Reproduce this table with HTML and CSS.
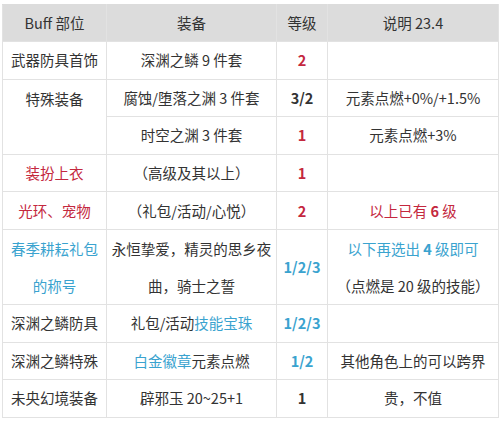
FILE: index.html
```html
<!DOCTYPE html>
<html lang="zh-CN">
<head>
<meta charset="utf-8">
<link rel="stylesheet" href="styles.css">
</head>
<body>
<table class="buff">
  <colgroup>
    <col class="c1"><col class="c2"><col class="c3"><col class="c4">
  </colgroup>
  <thead>
    <tr class="head"><th>Buff 部位</th><th>装备</th><th>等级</th><th>说明 23.4</th></tr>
  </thead>
  <tbody>
    <tr class="row"><td>武器防具首饰</td><td>深渊之鳞 9 件套</td><td class="lv red">2</td><td></td></tr>
    <tr class="row"><td rowspan="2" class="top">特殊装备</td><td>腐蚀/堕落之渊 3 件套</td><td class="lv">3/2</td><td>元素点燃+0%/+1.5%</td></tr>
    <tr class="row"><td>时空之渊 3 件套</td><td class="lv red">1</td><td>元素点燃+3%</td></tr>
    <tr class="row"><td class="red">装扮上衣</td><td>（高级及其以上）</td><td class="lv red">1</td><td></td></tr>
    <tr class="row"><td class="red">光环、宠物</td><td>（礼包/活动/心悦）</td><td class="lv red">2</td><td class="red">以上已有 <b>6</b> 级</td></tr>
    <tr class="tall"><td class="blue two">春季耕耘礼包<br>的称号</td><td class="two">永恒挚爱，精灵的思乡夜<br>曲，骑士之誓</td><td class="lv blue">1/2/3</td><td class="two"><span class="blue">以下再选出 <b>4</b> 级即可</span><br>（点燃是 20 级的技能）</td></tr>
    <tr class="row"><td>深渊之鳞防具</td><td>礼包/活动<span class="blue">技能宝珠</span></td><td class="lv blue">1/2/3</td><td></td></tr>
    <tr class="row"><td>深渊之鳞特殊</td><td><span class="blue">白金徽章</span>元素点燃</td><td class="lv blue">1/2</td><td>其他角色上的可以跨界</td></tr>
    <tr class="row"><td>未央幻境装备</td><td>辟邪玉 20~25+1</td><td class="lv">1</td><td>贵，不值</td></tr>
  </tbody>
</table>
</body>
</html>
```
FILE: styles.css
```css
html, body {
  margin: 0;
  padding: 0;
  background: #ffffff;
}
body {
  padding: 4px 2px 0 2px;
  font-family: "Noto Sans CJK SC", "Noto Sans", sans-serif;
  font-size: 14.5px;
  color: #333333;
}
.buff {
  border-collapse: collapse;
  table-layout: fixed;
  width: 496px;
}
.c1 { width: 104px; }
.c2 { width: 170px; }
.c3 { width: 51px; }
.c4 { width: 171px; }
.buff th, .buff td {
  border: 1px solid #e2e2e2;
  padding: 0;
  text-align: center;
  vertical-align: middle;
  line-height: 20px;
  white-space: nowrap;
}
.buff th {
  background: #dcdcdc;
  font-weight: normal;
  border-color: #dcdcdc #e2e2e2 #e2e2e2 #e2e2e2;
}
.head { height: 37px; }
.row { height: 37.6px; }
.tall { height: 75px; }
.buff td.top {
  vertical-align: top;
  padding-top: 9px;
}
.buff td.two {
  line-height: 37px;
}
.lv { font-weight: bold; }
.red { color: #c4283e; }
.blue { color: #3aa3cf; }
b { font-weight: bold; }
```
